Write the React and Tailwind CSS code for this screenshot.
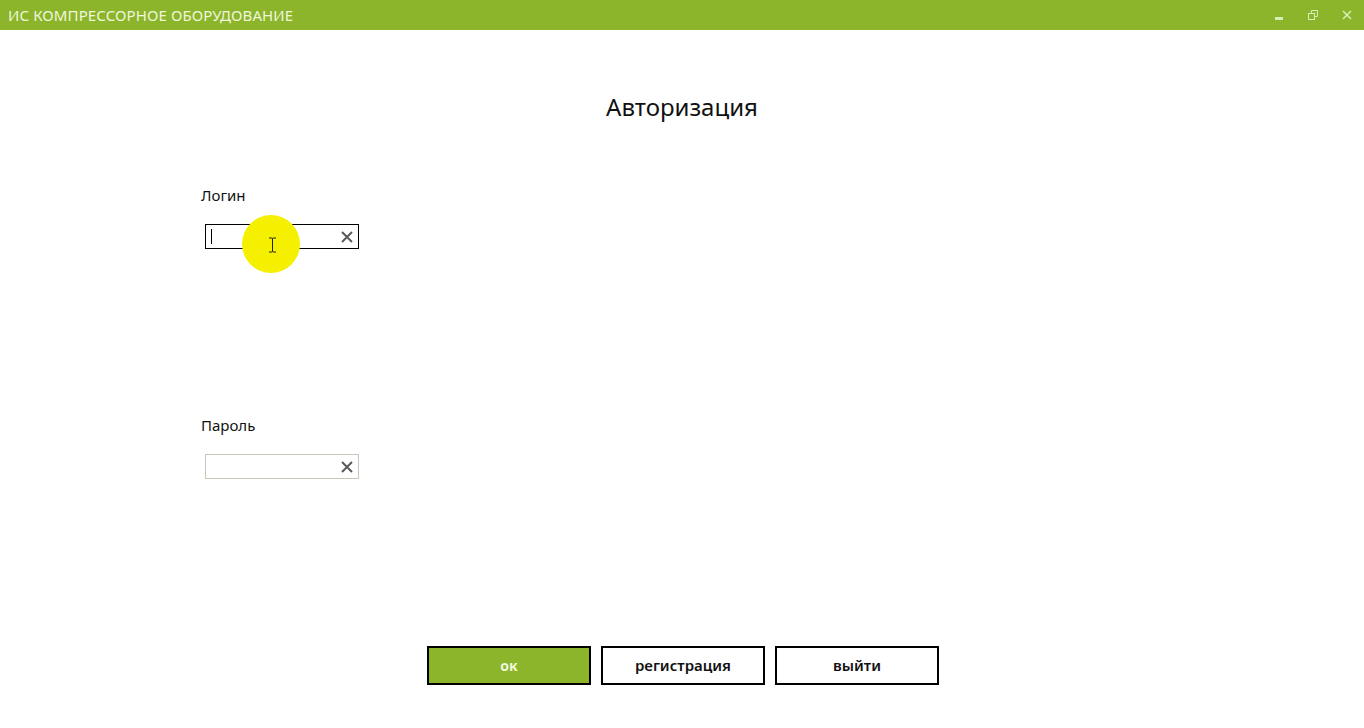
import React from 'react';

const font = { fontFamily: '"Noto Sans", "Open Sans", sans-serif' };

function ClearIcon() {
    return (
        <svg width="12" height="12" viewBox="0 0 12 12" className="shrink-0">
            <path d="M1 1 L11 11 M11 1 L1 11" stroke="#5a5a5a" strokeWidth="2" />
        </svg>
    );
}

function Field({ label, active }) {
    return (
        <div className="flex flex-col">
            <div className="text-[15px] text-[#111] leading-5 pl-[1px]">{label}</div>
            <div className={`mt-[19px] ml-[5px] w-[154px] h-[25px] flex items-center justify-between pl-[5px] pr-[5px] bg-white border ${active ? 'border-black' : 'border-[#c8c8b8]'}`}>
                {active ? <div className="w-[1px] h-[15px] bg-black" /> : <div />}
                <ClearIcon />
            </div>
        </div>
    );
}

export default function App() {
    return (
        <div className="w-[1364px] h-[728px] bg-white flex flex-col overflow-hidden relative" style={font}>
            <div className="h-[30px] bg-[#8cb52b] flex items-center justify-between pl-[8px] shrink-0">
                <div className="text-[15px] text-[#eef7dc] tracking-[0.1px]">ИС КОМПРЕССОРНОЕ ОБОРУДОВАНИЕ</div>
                <div className="flex items-center h-full">
                    <div className="w-[34px] h-full flex items-center justify-center">
                        <div className="w-[8px] h-[3px] bg-[#dbeeb5] mt-[6px]" />
                    </div>
                    <div className="w-[34px] h-full flex items-center justify-center">
                        <svg width="11" height="11" viewBox="0 0 11 11">
                            <rect x="0.5" y="3.5" width="6" height="6" fill="none" stroke="#dbeeb5" />
                            <path d="M3.5 3.5 V0.5 H9.5 V6.5 H6.5" fill="none" stroke="#dbeeb5" />
                        </svg>
                    </div>
                    <div className="w-[34px] h-full flex items-center justify-center">
                        <svg width="10" height="10" viewBox="0 0 10 10">
                            <path d="M1 1 L9 9 M9 1 L1 9" stroke="#dbeeb5" strokeWidth="1.5" />
                        </svg>
                    </div>
                </div>
            </div>

            <div className="flex-1 flex flex-col">
                <h1 className="text-center text-[24px] text-[#111] mt-[61px] leading-8">Авторизация</h1>
                <div className="pl-[200px] mt-[62px]">
                    <Field label="Логин" active />
                </div>
                <div className="pl-[200px] mt-[166px]">
                    <Field label="Пароль" />
                </div>
                <div className="mt-auto mb-[43px] pl-[2px] flex justify-center gap-[10px]">
                    <button className="w-[164px] h-[39px] bg-[#8cb52b] border-2 border-black text-[14px] font-bold text-[#eef7dc]">ок</button>
                    <button className="w-[164px] h-[39px] bg-white border-2 border-black text-[15px] text-[#111] font-semibold">регистрация</button>
                    <button className="w-[164px] h-[39px] bg-white border-2 border-black text-[15px] text-[#111] font-semibold">выйти</button>
                </div>
            </div>

            <div className="absolute left-[242px] top-[215px] w-[58px] h-[58px] rounded-full bg-[#f5ef00] flex items-center justify-center">
                <svg width="9" height="16" viewBox="0 0 9 16" className="mt-[1px] mr-[-3px]">
                    <path d="M1 1 H3.5 Q4.5 1 4.5 2 V14 Q4.5 15 3.5 15 H1 M8 1 H5.5 Q4.5 1 4.5 2 M4.5 14 Q4.5 15 5.5 15 H8" fill="none" stroke="#222" strokeWidth="1" />
                </svg>
            </div>
        </div>
    );
}
